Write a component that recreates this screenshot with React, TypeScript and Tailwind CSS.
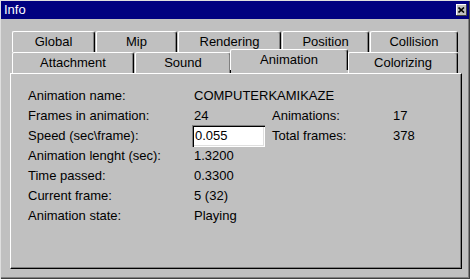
import React from "react";

const rowOne = [
  { label: "Global", w: "w-[84px]" },
  { label: "Mip", w: "w-[82px]" },
  { label: "Rendering", w: "w-[104px]" },
  { label: "Position", w: "w-[88px]" },
  { label: "Collision", w: "w-[89px]" },
];

const Tab = ({ label, w, selected }: { label: string; w: string; selected?: boolean }) => (
  <div
    className={`${w} ${
      selected ? "relative z-10 -ml-[2px] -mt-[2px] h-[24px] pb-[3px]" : "h-[21px] pr-px"
    } shrink-0`}
  >
    <div className="h-full flex items-center justify-center bg-[#c0c0c0] border-t border-l border-white border-r border-r-black rounded-tl-[2px] rounded-tr-[3px] shadow-[inset_-1px_0_#808080]">
      {label}
    </div>
  </div>
);

const InfoRow = ({ label, children }: { label: string; children: React.ReactNode }) => (
  <div className="flex h-[20px] items-center">
    <div className="w-[166px]">{label}</div>
    <div className="flex items-center">{children}</div>
  </div>
);

export default function App() {
  return (
    <div
      className="w-[470px] h-[279px] bg-[#c0c0c0] text-black text-[13px] leading-[20px] flex flex-col shadow-[inset_1px_1px_#dfdfdf,inset_-1px_-1px_#404040,inset_-2px_-2px_#808080]"
      style={{ fontFamily: '"Liberation Sans", Arial, sans-serif' }}
    >
      {/* title bar */}
      <div className="mt-px mx-px h-[18px] bg-[#000080] flex items-center justify-between pl-[3px] pr-[2px]">
        <span className="text-white text-[13px]">Info</span>
        <button className="w-[11px] h-[12px] bg-[#c0c0c0] flex items-center justify-center shadow-[inset_-1px_-1px_#404040,inset_1px_1px_#ffffff]">
          <svg width="7" height="6" viewBox="0 0 7 6">
            <path d="M0.5 0.5 L6 5.5 M6 0.5 L0.5 5.5" stroke="black" strokeWidth="1.6" />
          </svg>
        </button>
      </div>

      {/* tabs */}
      <div className="mt-[12px] ml-[12px] flex">
        {rowOne.map((t) => (
          <Tab key={t.label} label={t.label} w={t.w} />
        ))}
      </div>
      <div className="ml-[12px] flex items-end h-[21px]">
        <Tab label="Attachment" w="w-[123px]" />
        <Tab label="Sound" w="w-[97px]" />
        <Tab label="Animation" w="w-[118px]" selected />
        <Tab label="Colorizing" w="w-[111px]" />
      </div>

      {/* panel */}
      <div className="ml-[10px] w-[452px] h-[196px] border-t border-l border-white border-r border-b border-r-black border-b-black shadow-[inset_-1px_-1px_#808080] pl-[17px] pt-[12px]">
        <InfoRow label="Animation name:">COMPUTERKAMIKAZE</InfoRow>
        <InfoRow label="Frames in animation:">
          <span className="w-[78px]">24</span>
          <span className="w-[121px]">Animations:</span>
          <span>17</span>
        </InfoRow>
        <InfoRow label="Speed (sec\frame):">
          <div className="-ml-[2px] w-[73px] h-[22px] bg-white flex items-center pl-[3px] shadow-[inset_1px_1px_#808080,inset_2px_2px_#000000,inset_-1px_-1px_#ffffff,inset_-2px_-2px_#dfdfdf]">
            0.055
          </div>
          <span className="ml-[7px] w-[121px]">Total frames:</span>
          <span>378</span>
        </InfoRow>
        <InfoRow label="Animation lenght (sec):">1.3200</InfoRow>
        <InfoRow label="Time passed:">0.3300</InfoRow>
        <InfoRow label="Current frame:">5 (32)</InfoRow>
        <InfoRow label="Animation state:">Playing</InfoRow>
      </div>
    </div>
  );
}
